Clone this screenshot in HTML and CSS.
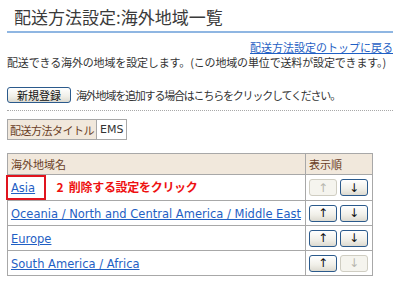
FILE: index.html
```html
<!DOCTYPE html>
<html>

<head>
    <title>配送方法設定:海外地域一覧</title>
    <link rel="stylesheet" href="styles.css">
</head>

<body>
    <div class="page">
        <h1 class="page-title">配送方法設定:海外地域一覧</h1>
        <div class="back-link"><a href="#">配送方法設定のトップに戻る</a></div>
        <p class="intro">配送できる海外の地域を設定します。(この地域の単位で送料が設定できます。)</p>

        <div class="new-row">
            <button type="button" class="btn">新規登録</button>
            <span class="new-hint">海外地域を追加する場合はこちらをクリックしてください。</span>
        </div>

        <table class="info-table">
            <tr>
                <th>配送方法タイトル</th>
                <td>EMS</td>
            </tr>
        </table>

        <table class="list-table">
            <tr>
                <th class="col-name">海外地域名</th>
                <th class="col-order">表示順</th>
            </tr>
            <tr>
                <td class="col-name">
                    <span class="marked"><a href="#">Asia</a></span>
                    <span class="note">2 削除する設定をクリック</span>
                </td>
                <td class="col-order">
                    <button type="button" class="btn arrow" disabled>↑</button><button type="button" class="btn arrow">↓</button>
                </td>
            </tr>
            <tr>
                <td class="col-name"><a href="#">Oceania / North and Central America / Middle East</a></td>
                <td class="col-order">
                    <button type="button" class="btn arrow">↑</button><button type="button" class="btn arrow">↓</button>
                </td>
            </tr>
            <tr>
                <td class="col-name"><a href="#">Europe</a></td>
                <td class="col-order">
                    <button type="button" class="btn arrow">↑</button><button type="button" class="btn arrow">↓</button>
                </td>
            </tr>
            <tr>
                <td class="col-name"><a href="#">South America / Africa</a></td>
                <td class="col-order">
                    <button type="button" class="btn arrow">↑</button><button type="button" class="btn arrow" disabled>↓</button>
                </td>
            </tr>
        </table>
    </div>
</body>

</html>
```

FILE: styles.css
```css
* {
    box-sizing: border-box;
}

body {
    margin: 0;
    font-family: "DejaVu Sans", "Noto Sans CJK JP", sans-serif;
    font-size: 11px;
    color: #333333;
    background-color: #ffffff;
}

a {
    color: #1f5fc4;
}

.page {
    padding: 0 7px;
}

.page-title {
    margin: 0;
    padding: 5px 7px 3px;
    font-family: "Noto Sans CJK JP", sans-serif;
    font-size: 17px;
    font-weight: normal;
    line-height: 23px;
    color: #3a3a3a;
    border-bottom: 2px solid #8fb6e2;
}

.back-link {
    margin-top: 7px;
    text-align: right;
    font-family: "Noto Sans CJK JP", sans-serif;
    font-size: 11px;
    line-height: 14px;
}

.intro {
    margin: 1px 0 0;
    font-family: "Noto Sans CJK JP", sans-serif;
    font-size: 11px;
    line-height: 14px;
    letter-spacing: -0.15px;
}

.new-row {
    display: flex;
    align-items: center;
    gap: 5px;
    margin-top: 18px;
    padding-bottom: 7px;
    border-bottom: 1px dotted #a8a8a8;
    font-family: "Noto Sans CJK JP", sans-serif;
    font-size: 11px;
}

.new-hint {
    font-size: 11px;
    letter-spacing: -1.2px;
}

.btn {
    font-family: "Noto Sans CJK JP", sans-serif;
    font-size: 11px;
    color: #111111;
    height: 16px;
    padding: 0 9px;
    line-height: 14px;
    border: 1px solid #2b5a8c;
    border-radius: 3px;
    background: linear-gradient(#ffffff, #f0efe8 60%, #dcdad0);
    cursor: pointer;
}

.btn:disabled {
    color: #b8b8b0;
    border-color: #cfcdc2;
    background: #f5f4ee;
    cursor: default;
}

.info-table,
.list-table {
    border-collapse: collapse;
    font-family: "Noto Sans CJK JP", sans-serif;
}

.info-table {
    margin-top: 8px;
}

.info-table th,
.info-table td {
    height: 20px;
    padding: 0 2px;
    border: 1px solid #a8a8a8;
    font-weight: normal;
    text-align: left;
}

.info-table th {
    background-color: #f1e8dc;
    color: #6a3e26;
    letter-spacing: -0.5px;
}

.info-table td {
    padding: 0 3px;
    font-family: "DejaVu Sans", sans-serif;
    font-size: 11px;
}

.list-table {
    margin-top: 13px;
    width: 366px;
}

.list-table th {
    height: 21px;
    padding: 0 3px;
    background-color: #f1e8dc;
    color: #6a3e26;
    font-weight: normal;
    text-align: left;
    border: 1px solid #a8a8a8;
}

.list-table td {
    height: 25px;
    padding: 0 3px;
    border: 1px solid #a8a8a8;
}

.list-table .col-order {
    width: 67px;
    white-space: nowrap;
}

.list-table td a {
    font-family: "DejaVu Sans", sans-serif;
    font-size: 11.5px;
}

.arrow {
    width: 28px;
    height: 17px;
    padding: 0;
    margin-left: 3px;
    font-family: "DejaVu Sans", sans-serif;
    font-size: 12px;
    font-weight: normal;
}

.arrow:first-child {
    margin-left: 0;
}

.marked {
    display: inline-block;
    margin-left: -5px;
    padding: 2px 9px 3px 3px;
    border: 2px solid #e0141e;
}

.note {
    margin-left: 8px;
    color: #ee1111;
    font-size: 12px;
    font-weight: bold;
    letter-spacing: -0.3px;
    word-spacing: 3px;
}
```
